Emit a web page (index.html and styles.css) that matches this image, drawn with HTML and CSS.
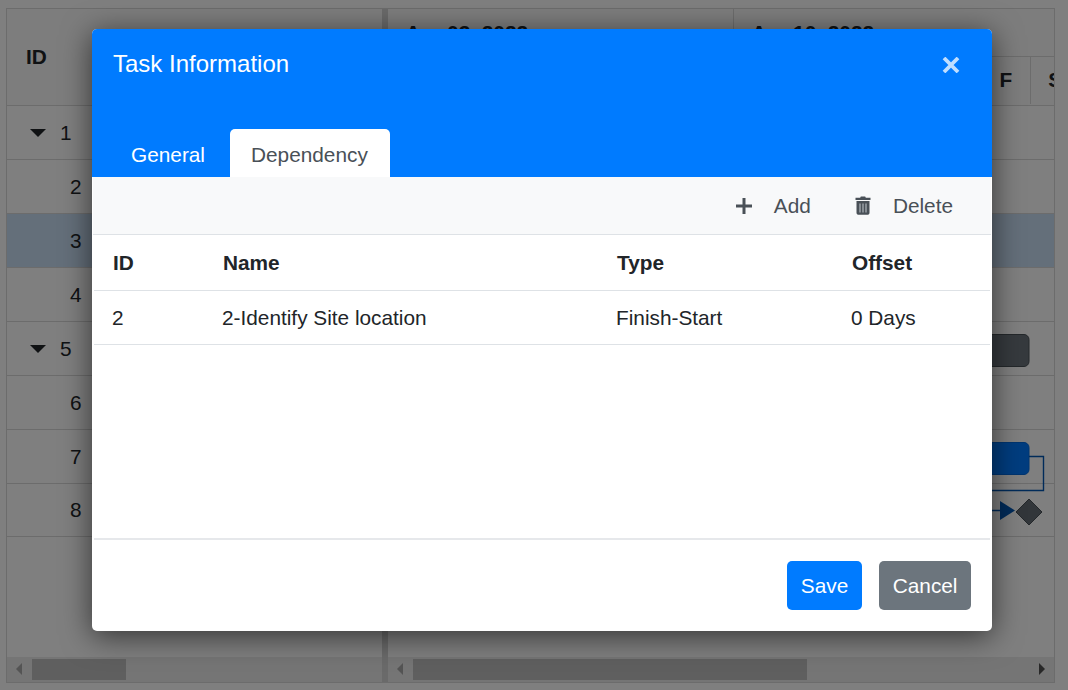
FILE: index.html
```html
<!DOCTYPE html>
<html lang="en">
<head>
  <meta charset="UTF-8" />
  <title>Task Information</title>
  <link rel="stylesheet" href="styles.css">
</head>
<body>

  <div class="gantt">
    <div class="pane grid-pane">
      <div class="grid-head">ID</div>
      <div class="rows">
        <div class="row parent"><span class="caret"></span>1</div>
        <div class="row child">2</div>
        <div class="row child selected">3</div>
        <div class="row child">4</div>
        <div class="row parent"><span class="caret"></span>5</div>
        <div class="row child">6</div>
        <div class="row child">7</div>
        <div class="row child">8</div>
      </div>
      <div class="scrollbar">
        <span class="arrow left"></span>
        <span class="thumb thumb-grid"></span>
      </div>
    </div>

    <div class="splitter"></div>

    <div class="pane chart-pane">
      <div class="chart-head">
        <div class="week">
          <div class="week-title">Apr 03, 2022</div>
          <div class="days"><span>S</span><span>M</span><span>T</span><span>W</span><span>T</span><span>F</span><span>S</span></div>
        </div>
        <div class="week">
          <div class="week-title">Apr 10, 2022</div>
          <div class="days"><span>S</span><span>M</span><span>T</span><span>W</span><span>T</span><span>F</span><span>S</span></div>
        </div>
      </div>
      <div class="rows">
        <div class="row"></div>
        <div class="row"></div>
        <div class="row selected"></div>
        <div class="row"></div>
        <div class="row"></div>
        <div class="row"></div>
        <div class="row"></div>
        <div class="row"></div>
        <!-- taskbars, coordinates relative to the chart rows -->
        <svg class="bars" width="666" height="440" viewBox="0 0 666 440">
          <rect x="400" y="229.500" width="241" height="32" rx="5" fill="#6c757d" stroke="#495057"/>
          <rect x="400" y="337.500" width="241" height="32" rx="5" fill="#007bff" stroke="#006ae0"/>
          <path d="M641 351.500H655.500V385.500H400" fill="none" stroke="#0056b3" stroke-width="1.400"/>
          <path d="M400 405.500H613" fill="none" stroke="#0056b3" stroke-width="1.400"/>
          <path d="M612 396L627 405.500L612 415Z" fill="#0056b3"/>
          <path d="M641 394L654 407L641 420L628 407Z" fill="#646c74" stroke="#495057"/>
        </svg>
      </div>
      <div class="scrollbar">
        <span class="arrow left"></span>
        <span class="thumb thumb-chart"></span>
        <span class="arrow right"></span>
      </div>
    </div>
  </div>

  <div class="backdrop">
    <div class="dialog">
      <div class="dialog-header">
        <div class="title-row">
          <div class="title">Task Information</div>
          <svg class="dismiss" width="18" height="16" viewBox="0 0 18 16">
            <path d="M2 1L16 15M16 1L2 15" fill="none" stroke="#bfdeff" stroke-width="3.800"/>
          </svg>
        </div>
        <div class="tabs">
          <div class="tab">General</div>
          <div class="tab active">Dependency</div>
        </div>
      </div>

      <div class="dialog-body">
        <div class="toolbar">
          <div class="tool">
            <svg width="16" height="18" viewBox="0 0 16 18">
              <path d="M8 1V17M0 9H16" fill="none" stroke="#495057" stroke-width="3"/>
            </svg>
            Add
          </div>
          <div class="tool">
            <svg width="16" height="19" viewBox="0 0 16 19">
              <path d="M5.200 1.800L5.800 .5H10.200L10.800 1.800H15.500V4H.5V1.800Z" fill="#495057"/>
              <path d="M1.500 5H14.500V16.800C14.500 18 13.800 18.700 12.800 18.700H3.200C2.200 18.700 1.500 18 1.500 16.800Z" fill="#495057"/>
              <path d="M5 7.500V16.500M8 7.500V16.500M11 7.500V16.500" fill="none" stroke="#b9bfc5" stroke-width="1.100"/>
            </svg>
            Delete
          </div>
        </div>

        <table class="deps">
          <colgroup>
            <col class="col-id"><col class="col-name"><col class="col-type"><col>
          </colgroup>
          <thead>
            <tr><th>ID</th><th>Name</th><th>Type</th><th>Offset</th></tr>
          </thead>
          <tbody>
            <tr><td>2</td><td>2-Identify Site location</td><td>Finish-Start</td><td>0 Days</td></tr>
          </tbody>
        </table>
      </div>

      <div class="dialog-footer">
        <button class="action action-save">Save</button>
        <button class="action action-cancel">Cancel</button>
      </div>
    </div>
  </div>

</body>
</html>
```

FILE: styles.css
```css
* {
  box-sizing: border-box;
}

body {
  margin: 0;
  height: 690px;
  overflow: hidden;
  font-family: "Liberation Sans", Arial, sans-serif;
  font-size: 20.8px;
  color: #212529;
  background: #fff;
}

/* gantt behind the dialog */
.gantt {
  display: flex;
  width: 1049px;
  height: 675px;
  margin: 7.5px 0 0 6px;
  border: 1px solid #d8d8d8;
  overflow: hidden;
}

.pane {
  display: flex;
  flex-direction: column;
  min-width: 0;
}

.grid-pane {
  width: 375px;
}

.chart-pane {
  flex: 1;
}

.splitter {
  width: 6px;
  background: #d4d4d4;
}

.grid-head {
  height: 96.5px;
  padding-left: 19px;
  display: flex;
  align-items: center;
  font-weight: bold;
  background: #fafafa;
}

.chart-head {
  display: flex;
  height: 96.5px;
  background: #fafafa;
}

.week {
  flex: 0 0 346px;
  min-width: 0;
  border-right: 1px solid #d8d8d8;
}

.week-title {
  height: 48px;
  padding: 12px 0 0 17.5px;
  font-weight: bold;
  border-bottom: 1px solid #d8d8d8;
}

.days {
  display: flex;
  height: 47px;
}

.days span {
  flex: 0 0 49.5px;
  display: flex;
  align-items: center;
  justify-content: center;
  font-weight: bold;
  border-right: 1px solid #d8d8d8;
}

.rows {
  position: relative;
  flex: 1;
}

.row {
  display: flex;
  align-items: center;
  height: 54px;
  border-top: 1px solid #d8d8d8;
}

.row:nth-child(8) {
  border-bottom: 1px solid #d8d8d8;
}

.selected {
  background: #c9dff5;
}

.parent {
  padding-left: 23px;
}

.child {
  padding-left: 63px;
}

.caret {
  width: 0;
  height: 0;
  margin-right: 14px;
  border-left: 8px solid transparent;
  border-right: 8px solid transparent;
  border-top: 8px solid #212529;
}

.bars {
  position: absolute;
  left: 0;
  top: 0;
}

.scrollbar {
  display: flex;
  align-items: center;
  height: 25px;
  padding: 0 9px;
  background: #eaeaea;
}

.arrow {
  width: 0;
  height: 0;
  border-top: 6px solid transparent;
  border-bottom: 6px solid transparent;
}

.arrow.left {
  border-right: 6px solid #a8a8a8;
}

.arrow.right {
  margin-left: auto;
  border-left: 6px solid #505050;
}

.thumb {
  height: 21px;
  background: #bebebe;
}

.thumb-grid {
  width: 94px;
  margin-left: 10px;
}

.thumb-chart {
  width: 394px;
  margin-left: 10px;
}

.backdrop {
  position: absolute;
  left: 0;
  top: 0;
  width: 1068px;
  height: 690px;
  padding: 29px 0 0 92px;
  background: rgba(0, 0, 0, .5);
}

/* dialog */
.dialog {
  width: 900px;
  height: 602px;
  display: flex;
  flex-direction: column;
  background: #fff;
  border-radius: 5px;
  box-shadow: 0 5px 30px rgba(0, 0, 0, .6);
  overflow: hidden;
}

.dialog-header {
  height: 148px;
  display: flex;
  flex-direction: column;
  justify-content: space-between;
  background: #007bff;
  color: #fff;
}

.title-row {
  display: flex;
  justify-content: space-between;
  align-items: center;
  padding: 21px 32px 0 21px;
}

.title {
  font-size: 24px;
}

.dismiss {
  margin-top: 2px;
}

.tabs {
  display: flex;
  gap: 4px;
  padding-left: 18px;
}

.tab {
  height: 48px;
  padding: 14px 21px 0;
  border-radius: 5px 5px 0 0;
}

.tab.active {
  padding-right: 22px;
  background: #fff;
  color: #495057;
}

.dialog-body {
  flex: 1;
  margin: 0 2px;
  border-bottom: 2px solid #e6e8eb;
}

.toolbar {
  display: flex;
  justify-content: flex-end;
  align-items: center;
  gap: 44px;
  height: 58px;
  margin: 0 -1px;
  padding: 0 38px 0 0;
  background: #f8f9fa;
  border-bottom: 1px solid #dee2e6;
  color: #495057;
}

.tool {
  display: flex;
  align-items: center;
  gap: 22px;
}

.deps {
  width: 100%;
  table-layout: fixed;
  border-collapse: collapse;
}

.col-id {
  width: 110px;
}

.col-name {
  width: 394px;
}

.col-type {
  width: 235px;
}

.deps th {
  height: 55px;
  padding: 2px 0 0 19px;
  text-align: left;
  border-bottom: 1px solid #dee2e6;
}

.deps td {
  height: 54px;
  padding: 2px 0 0 18px;
  border-bottom: 1px solid #dee2e6;
}

.dialog-footer {
  display: flex;
  justify-content: flex-end;
  gap: 17px;
  height: 91px;
  padding: 21px 21px 21px 0;
}

.action {
  height: 49px;
  padding: 0 13.5px;
  border: none;
  border-radius: 5px;
  font-family: inherit;
  font-size: 20.8px;
  color: #fff;
}

.action-save {
  padding: 0 14px;
  background: #007bff;
}

.action-cancel {
  background: #6c757d;
}
```
